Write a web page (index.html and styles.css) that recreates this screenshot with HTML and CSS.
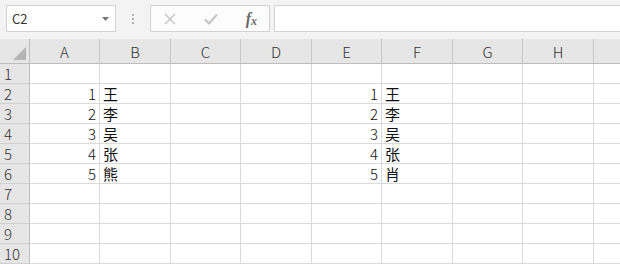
FILE: index.html
```html
<!DOCTYPE html>
<html>
<head>
  <title>Sheet</title>
  <link rel="stylesheet" href="styles.css">
</head>
<body>
  <!-- formula bar -->
  <div class="toolbar">
    <div class="namebox">
      <span>C2</span>
      <svg class="caret" width="7" height="4" viewBox="0 0 7 4"><path d="M0 0h7L3.5 4z" fill="#777"/></svg>
    </div>
    <div class="grip"><i></i><i></i><i></i></div>
    <div class="fxbox">
      <svg width="14" height="14" viewBox="0 0 14 14"><path d="M2 2l10 10M12 2L2 12" stroke="#c4c4c4" stroke-width="1.4" fill="none"/></svg>
      <svg width="16" height="14" viewBox="0 0 16 14"><path d="M2 7.5l4 4L14 2.5" stroke="#c4c4c4" stroke-width="2" fill="none"/></svg>
      <span class="fx">f<span class="fx-x">x</span></span>
    </div>
    <div class="formula"></div>
  </div>

  <div class="sheet" id="sheet"></div>

  <script>
    const cols = ['A','B','C','D','E','F','G','H'];
    const left = ['王','李','吴','张','熊'];
    const right = ['王','李','吴','张','肖'];
    const sheet = document.getElementById('sheet');

    function cell(cls, text) {
      const d = document.createElement('div');
      d.className = cls;
      d.textContent = text || '';
      sheet.appendChild(d);
    }

    // header row
    const corner = document.createElement('div');
    corner.className = 'corner';
    corner.innerHTML = '<svg width="13" height="13" viewBox="0 0 13 13"><path d="M13 0v13H0z" fill="#b4b4b4"/></svg>';
    sheet.appendChild(corner);
    cols.forEach(c => cell('colhead', c));
    cell('colhead rest');

    for (let r = 1; r <= 10; r++) {
      cell('rowhead', r);
      const i = r - 2;
      const has = i >= 0 && i < 5;
      cols.forEach(c => {
        let txt = '';
        let cls = 'cell';
        if (has && (c === 'A' || c === 'E')) { txt = i + 1; cls += ' num'; }
        if (has && (c === 'B' || c === 'F')) cls += ' name';
        if (has && c === 'B') txt = left[i];
        if (has && c === 'F') txt = right[i];
        cell(cls, txt);
      });
      cell('cell rest');
    }
  </script>
</body>
</html>
```

FILE: styles.css
```css
body {
  margin: 0;
  background-color: #ffffff;
  font-family: "Noto Sans CJK SC", "Noto Sans", sans-serif;
  font-weight: 300;
  overflow: hidden;
}
.toolbar {
  display: flex;
  align-items: center;
  height: 39px;
  padding: 0 0 0 6px;
  background-color: #f3f3f3;
  box-sizing: border-box;
}
.namebox {
  width: 110px;
  height: 27px;
  box-sizing: border-box;
  border: 1px solid #d2d2d2;
  background: #fff;
  display: flex;
  align-items: center;
  justify-content: space-between;
  padding: 0 6px 0 5px;
  font-size: 13px;
  font-weight: 400;
  color: #333;
  margin-top: -2px;
}
.caret {
  margin-top: 1px;
}
.grip {
  width: 34px;
  display: flex;
  flex-direction: column;
  align-items: center;
  gap: 2px;
  margin-top: -2px;
}
.grip i {
  width: 2px;
  height: 2px;
  background: #b4b4b4;
}
.fxbox {
  width: 120px;
  height: 27px;
  box-sizing: border-box;
  border: 1px solid #d2d2d2;
  background: #fcfcfc;
  display: flex;
  align-items: center;
  justify-content: space-between;
  padding: 0 12px 0 12px;
  margin-top: -2px;
}
.fx {
  font-family: "Liberation Serif", serif;
  font-style: italic;
  font-weight: bold;
  font-size: 16px;
  color: #6a6a6a;
  line-height: 1;
}
.fx-x {
  font-size: 12px;
  position: relative;
  top: 1px;
}
.formula {
  flex: 1;
  height: 27px;
  box-sizing: border-box;
  border: 1px solid #d2d2d2;
  border-right: none;
  background: #fff;
  margin-left: 4px;
  margin-top: -2px;
}
.sheet {
  display: grid;
  grid-template-columns: 30px 70px 71px 70px 71px 70px 71px 70px 71px 1fr;
  grid-template-rows: 25px repeat(10, 20px);
}
.sheet div {
  box-sizing: border-box;
}
.corner {
  background: #e6e6e6;
  border-right: 1px solid #bdbdbd;
  border-bottom: 1px solid #bdbdbd;
  display: flex;
  align-items: flex-end;
  justify-content: flex-end;
  padding: 0 3px 3px 0;
}
.corner svg {
  display: block;
}
.colhead {
  background: #e6e6e6;
  border-right: 1px solid #c8c8c8;
  border-bottom: 1px solid #bdbdbd;
  text-align: center;
  font-size: 15px;
  line-height: 25px;
  color: #333;
}
.colhead.rest {
  border-right: none;
}
.rowhead {
  background: #e6e6e6;
  border-right: 1px solid #bdbdbd;
  border-bottom: 1px solid #d0d0d0;
  font-size: 15px;
  line-height: 19px;
  color: #333;
  padding-left: 4px;
}
.cell {
  border-right: 1px solid #dadada;
  border-bottom: 1px solid #dadada;
  font-size: 15px;
  line-height: 19px;
  color: #111;
  padding: 0 3px;
}
.cell.num {
  text-align: right;
}
.cell.name {
  font-weight: 400;
}
.cell.rest {
  border-right: none;
}
```
